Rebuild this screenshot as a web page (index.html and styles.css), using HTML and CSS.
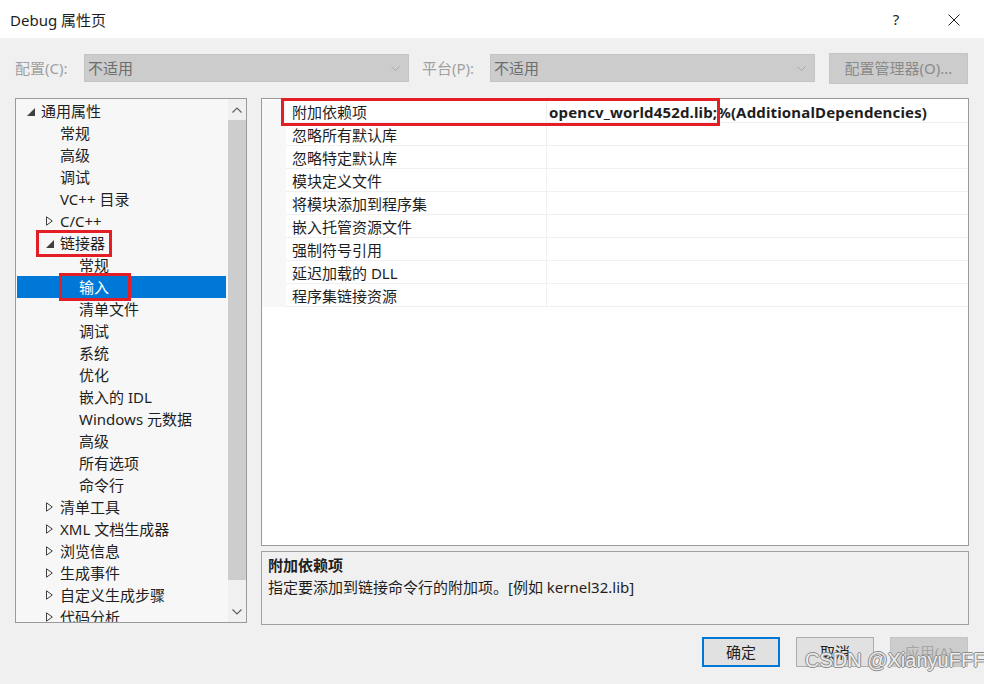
FILE: index.html
```html
<!DOCTYPE html>
<html lang="zh-CN">
<head>
    <meta charset="UTF-8">
    <title>Debug 属性页</title>
    <link rel="stylesheet" href="styles.css">
</head>
<body>
    <div class="dialog">
        <div class="titlebar">
            <span class="title">Debug 属性页</span>
            <div class="title-buttons">
                <span class="help">?</span>
                <span class="close">
                    <svg width="12" height="12" viewBox="0 0 12 12"><path d="M0.5 0.5 L11.5 11.5 M11.5 0.5 L0.5 11.5" stroke="#1e1e1e" stroke-width="1" fill="none"/></svg>
                </span>
            </div>
        </div>

        <div class="toolbar">
            <span class="tb-label">配置(C):</span>
            <div class="combo">
                <span>不适用</span>
                <svg class="chevron" width="9" height="5" viewBox="0 0 9 5"><path d="M0.5 0.5 L4.5 4.5 L8.5 0.5" stroke="#a8a8a8" fill="none"/></svg>
            </div>
            <span class="tb-label platform">平台(P):</span>
            <div class="combo">
                <span>不适用</span>
                <svg class="chevron" width="9" height="5" viewBox="0 0 9 5"><path d="M0.5 0.5 L4.5 4.5 L8.5 0.5" stroke="#a8a8a8" fill="none"/></svg>
            </div>
            <button class="btn btn-manager" disabled>配置管理器(O)...</button>
        </div>

        <div class="main">
            <div class="tree">
                <ul class="tree-list">
                    <li class="node l0"><span class="twisty open"></span>通用属性</li>
                    <li class="node l1"><span class="twisty"></span>常规</li>
                    <li class="node l1"><span class="twisty"></span>高级</li>
                    <li class="node l1"><span class="twisty"></span>调试</li>
                    <li class="node l1"><span class="twisty"></span>VC++ 目录</li>
                    <li class="node l1"><span class="twisty closed"></span>C/C++</li>
                    <li class="node l1"><span class="mark mark-linker"><span class="twisty open"></span>链接器</span></li>
                    <li class="node l2"><span class="twisty"></span>常规</li>
                    <li class="node l2 selected"><span class="twisty"></span><span class="mark mark-input">输入</span></li>
                    <li class="node l2"><span class="twisty"></span>清单文件</li>
                    <li class="node l2"><span class="twisty"></span>调试</li>
                    <li class="node l2"><span class="twisty"></span>系统</li>
                    <li class="node l2"><span class="twisty"></span>优化</li>
                    <li class="node l2"><span class="twisty"></span>嵌入的 IDL</li>
                    <li class="node l2"><span class="twisty"></span>Windows 元数据</li>
                    <li class="node l2"><span class="twisty"></span>高级</li>
                    <li class="node l2"><span class="twisty"></span>所有选项</li>
                    <li class="node l2"><span class="twisty"></span>命令行</li>
                    <li class="node l1"><span class="twisty closed"></span>清单工具</li>
                    <li class="node l1"><span class="twisty closed"></span>XML 文档生成器</li>
                    <li class="node l1"><span class="twisty closed"></span>浏览信息</li>
                    <li class="node l1"><span class="twisty closed"></span>生成事件</li>
                    <li class="node l1"><span class="twisty closed"></span>自定义生成步骤</li>
                    <li class="node l1"><span class="twisty closed"></span>代码分析</li>
                </ul>
                <div class="scrollbar">
                    <div class="sb-arrow">
                        <svg width="10" height="6" viewBox="0 0 10 6"><path d="M0.5 5.5 L5 1 L9.5 5.5" stroke="#606060" stroke-width="1.2" fill="none"/></svg>
                    </div>
                    <div class="sb-thumb"></div>
                    <div class="sb-track"></div>
                    <div class="sb-arrow">
                        <svg width="10" height="6" viewBox="0 0 10 6"><path d="M0.5 0.5 L5 5 L9.5 0.5" stroke="#606060" stroke-width="1.2" fill="none"/></svg>
                    </div>
                </div>
            </div>

            <div class="right">
                <div class="grid">
                    <div class="grid-row">
                        <div class="gutter"></div>
                        <div class="name">附加依赖项</div>
                        <div class="value">opencv_world452d.lib;%(AdditionalDependencies)</div>
                    </div>
                    <div class="grid-row"><div class="gutter"></div><div class="name">忽略所有默认库</div><div class="value"></div></div>
                    <div class="grid-row"><div class="gutter"></div><div class="name">忽略特定默认库</div><div class="value"></div></div>
                    <div class="grid-row"><div class="gutter"></div><div class="name">模块定义文件</div><div class="value"></div></div>
                    <div class="grid-row"><div class="gutter"></div><div class="name">将模块添加到程序集</div><div class="value"></div></div>
                    <div class="grid-row"><div class="gutter"></div><div class="name">嵌入托管资源文件</div><div class="value"></div></div>
                    <div class="grid-row"><div class="gutter"></div><div class="name">强制符号引用</div><div class="value"></div></div>
                    <div class="grid-row"><div class="gutter"></div><div class="name">延迟加载的 DLL</div><div class="value"></div></div>
                    <div class="grid-row"><div class="gutter"></div><div class="name">程序集链接资源</div><div class="value"></div></div>
                    <div class="grid-mark"></div>
                </div>
                <div class="desc">
                    <div class="desc-title">附加依赖项</div>
                    <div class="desc-text">指定要添加到链接命令行的附加项。[例如 kernel32.lib]</div>
                </div>
            </div>
        </div>

        <div class="footer">
            <button class="btn btn-ok">确定</button>
            <button class="btn">取消</button>
            <button class="btn btn-disabled" disabled>应用(A)</button>
        </div>

        <div class="watermark">CSDN @XianyuFFF</div>
    </div>
</body>
</html>
```

FILE: styles.css
```css
* {
    margin: 0;
    padding: 0;
    box-sizing: border-box;
}

body {
    width: 984px;
    height: 684px;
    overflow: hidden;
    background-color: #f0f0f0;
    font-family: "Noto Sans", "Noto Sans CJK SC", sans-serif;
    font-size: 15px;
    color: #1e1e1e;
}

.dialog {
    position: relative;
    width: 984px;
    height: 684px;
}

/* Title bar */
.titlebar {
    height: 38px;
    background-color: #ffffff;
    display: flex;
    align-items: center;
    justify-content: space-between;
    padding: 0 20px 0 10px;
}

.title {
    font-size: 15px;
    line-height: 20px;
    padding-top: 2px;
}

.title-buttons {
    display: flex;
    align-items: center;
    gap: 38px;
}

.help {
    width: 20px;
    text-align: center;
    font-size: 15px;
    line-height: 20px;
}

.close {
    width: 20px;
    height: 20px;
    display: flex;
    align-items: center;
    justify-content: center;
    padding-top: 2px;
}

/* Configuration row */
.toolbar {
    height: 60px;
    display: flex;
    align-items: center;
    padding: 0 15px;
}

.tb-label {
    width: 69px;
    color: #a0a0a0;
    line-height: 20px;
}

.tb-label.platform {
    width: 68px;
    margin-left: 13px;
}

.combo {
    width: 325px;
    height: 28px;
    background-color: #cccccc;
    border: 1px solid #c4c4c4;
    display: flex;
    align-items: center;
    justify-content: space-between;
    padding: 0 8px 0 3px;
    color: #6d6d6d;
    line-height: 20px;
}

.btn {
    font-family: inherit;
    font-size: 15px;
    color: #1e1e1e;
    background-color: #e1e1e1;
    border: 1px solid #adadad;
    width: 78px;
    height: 30px;
    line-height: 20px;
}

.btn-manager {
    width: 139px;
    height: 31px;
    margin-left: 14px;
    background-color: #cccccc;
    border-color: #c4c4c4;
    color: #8a8a8a;
}

/* Main area */
.main {
    height: 527px;
    display: flex;
    gap: 14px;
    padding: 0 15px;
}

.tree {
    width: 232px;
    height: 525px;
    border: 1px solid #9a9a9a;
    background-color: #f7f7f7;
    display: flex;
    overflow: hidden;
}

.tree-list {
    flex: 1;
    list-style: none;
    padding-top: 1px;
    overflow: hidden;
}

.node {
    height: 22px;
    display: flex;
    align-items: center;
    white-space: nowrap;
    line-height: 20px;
    margin-right: 2px;
}

.node.l0 { padding-left: 10px; }
.node.l1 { padding-left: 29px; }
.node.l2 { padding-left: 48px; }

.node.selected {
    background-color: #0078d7;
    color: #ffffff;
    margin-left: 1px;
    padding-left: 47px;
}

.twisty {
    width: 15px;
    height: 22px;
    flex: none;
    position: relative;
}

.twisty.open::before {
    content: "";
    position: absolute;
    left: 1px;
    top: 8px;
    width: 0;
    height: 0;
    border-style: solid;
    border-width: 0 0 8px 8px;
    border-color: transparent transparent #404040 transparent;
}

.twisty.closed::before {
    content: "";
    position: absolute;
    left: 1px;
    top: 6px;
    width: 7px;
    height: 10px;
    background: no-repeat center / 7px 10px;
    background-image: url("data:image/svg+xml;utf8,<svg xmlns='http://www.w3.org/2000/svg' width='7' height='10' viewBox='0 0 7 10'><path d='M0.5 0.8 L6.3 5 L0.5 9.2 Z' fill='none' stroke='%23404040' stroke-width='1'/></svg>");
}

.mark {
    display: inline-flex;
    align-items: center;
    height: 21px;
    outline: 3px solid #e31e24;
}

.mark-linker {
    margin-left: -6px;
    padding: 0 4px 0 6px;
}

.mark-input {
    margin-left: -17px;
    padding: 0 19px 0 17px;
    height: 22px;
}

.scrollbar {
    width: 18px;
    flex: none;
    display: flex;
    flex-direction: column;
    background-color: #f0f0f0;
}

.sb-arrow {
    height: 21px;
    display: flex;
    align-items: center;
    justify-content: center;
}

.sb-thumb {
    height: 460px;
    background-color: #cdcdcd;
}

.sb-track {
    flex: 1;
}

/* Property grid */
.right {
    flex: 1;
    display: flex;
    flex-direction: column;
    gap: 5px;
}

.grid {
    position: relative;
    height: 448px;
    border: 1px solid #9a9a9a;
    background-color: #ffffff;
    padding-top: 1px;
}

.grid-row {
    height: 23px;
    display: flex;
    line-height: 20px;
}

.gutter {
    width: 24px;
    flex: none;
    background-color: #f7f7f7;
}

.name {
    width: 260px;
    flex: none;
    padding: 2px 0 0 6px;
    border-bottom: 1px solid #f0f0f0;
}

.value {
    flex: 1;
    padding: 2px 0 0 2px;
    border-left: 1px solid #f0f0f0;
    border-bottom: 1px solid #f0f0f0;
    font-weight: bold;
    letter-spacing: 0.15px;
    white-space: nowrap;
    overflow: hidden;
}

.grid-mark {
    position: absolute;
    left: 19px;
    top: -1px;
    width: 439px;
    height: 28px;
    border: 3px solid #e31e24;
}

.desc {
    flex: 1;
    border: 1px solid #a0a0a0;
    background-color: #f0f0f0;
    padding: 2px 6px;
    line-height: 22px;
}

.desc-title {
    font-weight: bold;
}

/* Buttons */
.footer {
    display: flex;
    justify-content: flex-end;
    gap: 16px;
    padding: 12px 16px 0 0;
}

.btn-ok {
    border: 2px solid #0078d7;
}

.btn-disabled {
    background-color: #cccccc;
    border-color: #c4c4c4;
    color: #a6a6a6;
}

.watermark {
    position: absolute;
    left: 805px;
    top: 648px;
    font-family: "Liberation Sans", sans-serif;
    font-size: 20px;
    line-height: 24px;
    white-space: nowrap;
    color: rgba(255, 255, 255, 0.85);
    text-shadow: 1px 0 0 #8c8c8c, -1px 0 0 #8c8c8c, 0 1px 0 #8c8c8c, 0 -1px 0 #8c8c8c;
}
```
